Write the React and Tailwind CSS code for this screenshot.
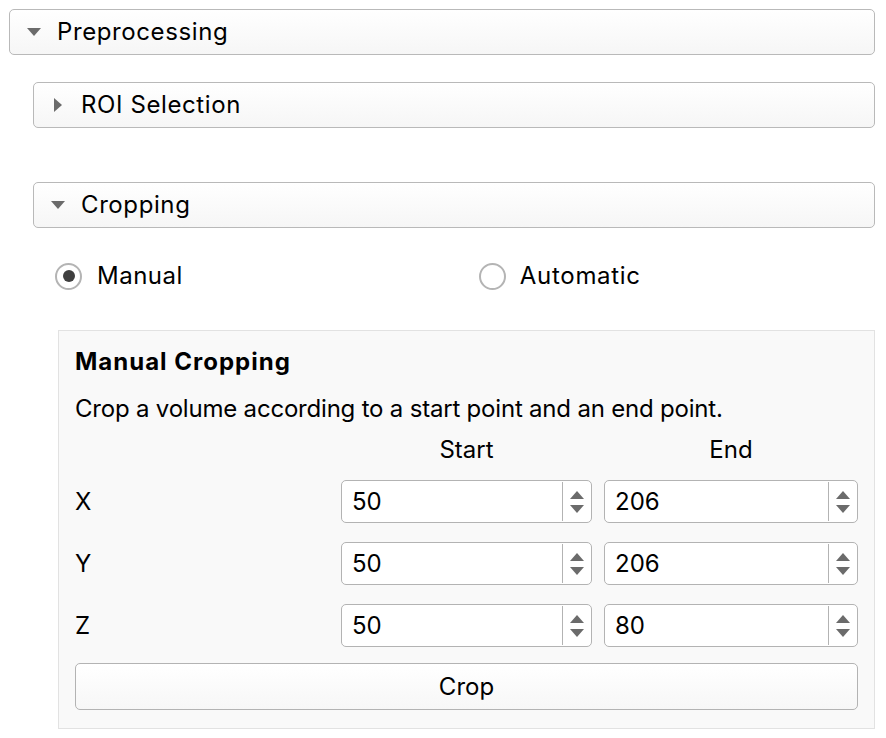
import React from "react";

const font = { fontFamily: "Inter, 'Noto Sans', sans-serif" };

function Header({ label, open, className }) {
  return (
    <div
      className={`flex items-center h-[46px] border border-[#b9b9b9] rounded-[5px] bg-gradient-to-b from-[#ffffff] to-[#f6f6f6] ${className}`}
    >
      <div className="w-[47px] flex justify-center">
        {open ? (
          <svg width="14" height="8" viewBox="0 0 14 8">
            <path d="M0 0 L14 0 L7 8 Z" fill="#6b6b6b" />
          </svg>
        ) : (
          <svg width="8" height="14" viewBox="0 0 8 14">
            <path d="M0 0 L8 7 L0 14 Z" fill="#6b6b6b" />
          </svg>
        )}
      </div>
      <span className="text-[24px] tracking-[0.6px] text-black leading-none">{label}</span>
    </div>
  );
}

function Spin({ value, w }) {
  return (
    <div
      className={`flex h-[43px] ${w} border border-[#b3b3b3] rounded-[5px] bg-white`}
    >
      <div className="flex-1 flex items-center pl-[10px] text-[24px] text-black">
        {value}
      </div>
      <div className="w-[29px] border-l border-[#b3b3b3] my-[1px] flex flex-col items-center justify-center gap-[6px]">
        <svg width="14" height="8" viewBox="0 0 14 8">
          <path d="M0 8 L7 0 L14 8 Z" fill="#6b6b6b" />
        </svg>
        <svg width="14" height="8" viewBox="0 0 14 8">
          <path d="M0 0 L14 0 L7 8 Z" fill="#6b6b6b" />
        </svg>
      </div>
    </div>
  );
}

function Row({ label, a, b }) {
  return (
    <div className="flex items-center h-[43px]">
      <div className="w-[266px] text-[24px] text-black">{label}</div>
      <Spin value={a} w="w-[251px]" />
      <div className="w-[12px]" />
      <Spin value={b} w="w-[254px]" />
    </div>
  );
}

export default function App() {
  return (
    <div className="w-[886px] h-[738px] bg-white pt-[9px]" style={font}>
      <Header label="Preprocessing" open className="ml-[9px] w-[866px] h-[45px]" />
      <Header label="ROI Selection" open={false} className="ml-[33px] w-[842px] mt-[27px]" />
      <Header label="Cropping" open className="ml-[33px] w-[842px] mt-[54px]" />

      <div className="flex items-center h-[28px] mt-[34px]">
        <div className="ml-[55px] w-[27px] h-[27px] rounded-full border-2 border-[#b4b4b4] bg-white flex items-center justify-center">
          <div className="w-[12px] h-[12px] rounded-full bg-[#3f3f3f]" />
        </div>
        <span className="ml-[15px] text-[24px] tracking-[0.5px] text-black">Manual</span>
        <div className="ml-[296px] w-[27px] h-[27px] rounded-full border-2 border-[#b4b4b4] bg-white" />
        <span className="ml-[14px] text-[24px] tracking-[0.7px] text-black">Automatic</span>
      </div>

      <div className="ml-[58px] mt-[40px] w-[817px] h-[399px] border border-[#e2e2e2] bg-[#f9f9f9] pl-[16px] pt-[14px]">
        <div className="text-[24px] font-bold tracking-[1px] text-black leading-[34px]">Manual Cropping</div>
        <div className="text-[24px] tracking-[-0.2px] text-black leading-[34px] mt-[13px]">
          Crop a volume according to a start point and an end point.
        </div>
        <div className="flex h-[32px] mt-[8px] items-center text-[24px] text-black">
          <div className="w-[266px]" />
          <div className="w-[251px] text-center">Start</div>
          <div className="w-[12px]" />
          <div className="w-[254px] text-center">End</div>
        </div>
        <div className="flex flex-col gap-[19px] mt-[14px]">
          <Row label="X" a="50" b="206" />
          <Row label="Y" a="50" b="206" />
          <Row label="Z" a="50" b="80" />
        </div>
        <div className="mt-[16px] w-[783px] h-[47px] border border-[#b3b3b3] rounded-[5px] bg-gradient-to-b from-[#ffffff] to-[#f7f7f7] flex items-center justify-center text-[24px] text-black">
          Crop
        </div>
      </div>
    </div>
  );
}
